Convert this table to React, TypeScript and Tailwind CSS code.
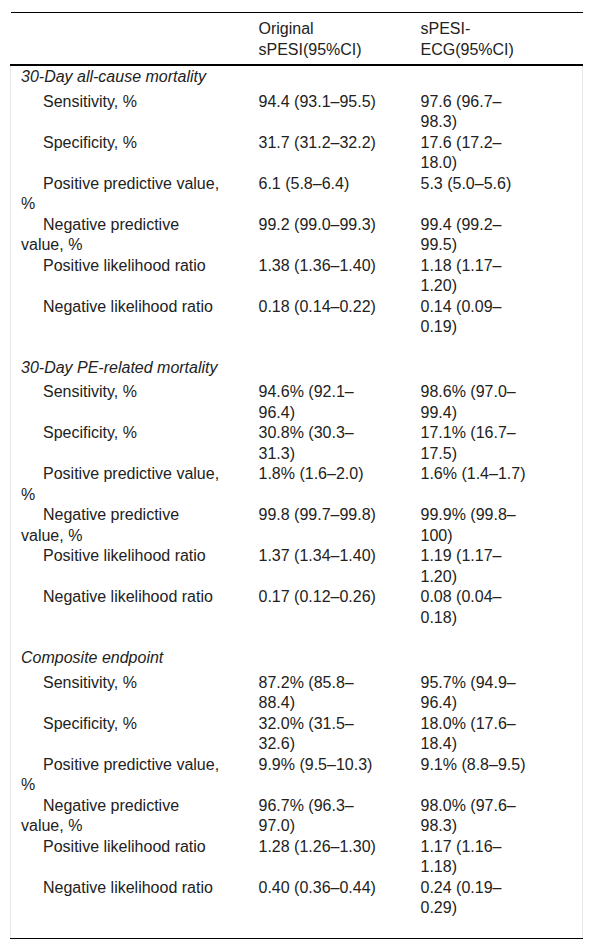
import React from "react";

type Row = { label: string; a: string; b: string };
type Section = { title: string; rows: Row[] };

const sections: Section[] = [
  {
    title: "30-Day all-cause mortality",
    rows: [
      { label: "Sensitivity, %", a: "94.4 (93.1–95.5)", b: "97.6 (96.7–98.3)" },
      { label: "Specificity, %", a: "31.7 (31.2–32.2)", b: "17.6 (17.2–18.0)" },
      { label: "Positive predictive value, %", a: "6.1 (5.8–6.4)", b: "5.3 (5.0–5.6)" },
      { label: "Negative predictive value, %", a: "99.2 (99.0–99.3)", b: "99.4 (99.2–99.5)" },
      { label: "Positive likelihood ratio", a: "1.38 (1.36–1.40)", b: "1.18 (1.17–1.20)" },
      { label: "Negative likelihood ratio", a: "0.18 (0.14–0.22)", b: "0.14 (0.09–0.19)" },
    ],
  },
  {
    title: "30-Day PE-related mortality",
    rows: [
      { label: "Sensitivity, %", a: "94.6% (92.1–96.4)", b: "98.6% (97.0–99.4)" },
      { label: "Specificity, %", a: "30.8% (30.3–31.3)", b: "17.1% (16.7–17.5)" },
      { label: "Positive predictive value, %", a: "1.8% (1.6–2.0)", b: "1.6% (1.4–1.7)" },
      { label: "Negative predictive value, %", a: "99.8 (99.7–99.8)", b: "99.9% (99.8–100)" },
      { label: "Positive likelihood ratio", a: "1.37 (1.34–1.40)", b: "1.19 (1.17–1.20)" },
      { label: "Negative likelihood ratio", a: "0.17 (0.12–0.26)", b: "0.08 (0.04–0.18)" },
    ],
  },
  {
    title: "Composite endpoint",
    rows: [
      { label: "Sensitivity, %", a: "87.2% (85.8–88.4)", b: "95.7% (94.9–96.4)" },
      { label: "Specificity, %", a: "32.0% (31.5–32.6)", b: "18.0% (17.6–18.4)" },
      { label: "Positive predictive value, %", a: "9.9% (9.5–10.3)", b: "9.1% (8.8–9.5)" },
      { label: "Negative predictive value, %", a: "96.7% (96.3–97.0)", b: "98.0% (97.6–98.3)" },
      { label: "Positive likelihood ratio", a: "1.28 (1.26–1.30)", b: "1.17 (1.16–1.18)" },
      { label: "Negative likelihood ratio", a: "0.40 (0.36–0.44)", b: "0.24 (0.19–0.29)" },
    ],
  },
];

export default function App() {
  return (
    <div
      className="w-[592px] bg-white px-[10px] pt-[12px] pb-[10px] text-[16px] leading-[20.5px] text-[#222]"
      style={{ fontFamily: '"Liberation Sans", Arial, Helvetica, sans-serif' }}
    >
      <table className="w-[572px] table-fixed border-collapse">
        <colgroup>
          <col className="w-[238px]" />
          <col className="w-[162px]" />
          <col className="w-[172px]" />
        </colgroup>
        <thead>
          <tr className="border-t border-b-2 border-t-black border-b-black">
            <th className="pl-[10px] pr-[27px] pt-[6px] pb-[4px]"></th>
            <th className="pl-[10px] pr-[27px] pt-[6px] pb-[4px] text-left align-top font-normal">
              Original sPESI(95%CI)
            </th>
            <th className="pl-[10px] pr-[51px] pt-[6px] pb-[4px] text-left align-top font-normal">
              sPESI-ECG(95%CI)
            </th>
          </tr>
        </thead>
        <tbody className="border-x border-x-[#e8e8e8]">
          {sections.map((s, si) => (
            <React.Fragment key={s.title}>
              <tr>
                <td
                  colSpan={3}
                  className={
                    "pl-[10px] pb-[4px] italic " + (si === 0 ? "pt-[1px]" : "pt-[20px]")
                  }
                >
                  {s.title}
                </td>
              </tr>
              {s.rows.map((r, ri) => {
                const last = si === sections.length - 1 && ri === s.rows.length - 1;
                return (
                  <tr key={r.label} className={last ? "border-b border-b-black" : ""}>
                    <td className={"pl-[10px] pr-[27px] align-top indent-[22px] " + (last ? "pb-[19px]" : "")}>
                      {r.label}
                    </td>
                    <td className={"pl-[10px] pr-[27px] align-top " + (last ? "pb-[19px]" : "")}>{r.a}</td>
                    <td className={"pl-[10px] pr-[51px] align-top " + (last ? "pb-[19px]" : "")}>{r.b}</td>
                  </tr>
                );
              })}
            </React.Fragment>
          ))}
        </tbody>
      </table>
    </div>
  );
}
